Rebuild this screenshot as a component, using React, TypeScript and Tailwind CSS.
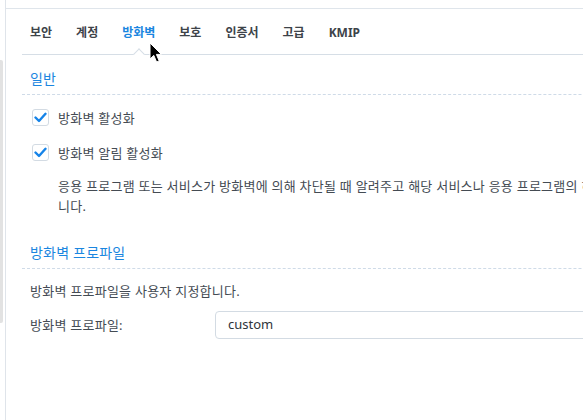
import React from 'react';

const tabs = ['보안', '계정', '방화벽', '보호', '인증서', '고급', 'KMIP'];
const activeTab = '방화벽';

const CheckBox: React.FC<{ label: string }> = ({ label }) => (
  <label className="flex items-center gap-[9px]">
    <span className="flex size-[17px] items-center justify-center rounded-[3px] border border-[#d3dbe3] bg-white">
      <svg width="13" height="11" viewBox="0 0 13 11" fill="none">
        <path d="M1.5 5.5 L5 9 L11.5 1.8" stroke="#1583e8" strokeWidth="2.4" strokeLinecap="round" strokeLinejoin="round" />
      </svg>
    </span>
    <span className="text-[13px] leading-[20px] tracking-[0.25px] text-[#444b53]">{label}</span>
  </label>
);

const SectionTitle: React.FC<{ title: string }> = ({ title }) => (
  <div className="border-b border-dashed border-[#cfdbe8] pl-[8px] pb-[5px]">
    <h3 className="text-[14px] leading-[20px] tracking-[0.2px] text-[#1a86e0]">{title}</h3>
  </div>
);

const Pointer: React.FC = () => (
  <svg className="absolute left-[149px] top-[42px]" width="14" height="22" viewBox="0 0 14 22">
    <path d="M1 1 L1 17 L4.8 13.4 L7.6 20 L10.2 18.9 L7.4 12.4 L12.4 12.4 Z" fill="#000" stroke="#fff" strokeWidth="1" />
  </svg>
);

export default function App() {
  return (
    <div className="relative flex h-[420px] w-[583px] overflow-hidden bg-white font-['Noto_Sans','Noto_Sans_CJK_KR',sans-serif]">
      {/* side panel edge with its scroll thumb */}
      <div className="w-[6px] shrink-0 border-r border-[#dfe4ea] pt-[60px]">
        <div className="h-[263px] w-[3px] rounded-r-[2px] bg-[#e2e2e2]" />
      </div>

      <div className="flex min-w-0 flex-1 flex-col pt-[8px]">
        <div className="flex-1 border-t border-[#dfe5eb] pl-[16px]">
          {/* tab strip */}
          <div className="relative flex h-[46px] w-[700px] items-end gap-[24px] border-b border-[#d6dee6] pb-[11px] pl-[8px]">
            {tabs.map((tab) => (
              <div key={tab} className="relative">
                <span
                  className={`text-[12px] font-bold leading-[16px] ${
                    tab === activeTab ? 'text-[#1a86e0]' : 'text-[#3d4349]'
                  }`}
                >
                  {tab}
                </span>
                {tab === activeTab && (
                  <span className="absolute bottom-[-15px] left-[13px] size-[8px] rotate-45 border-l border-t border-[#d6dee6] bg-white" />
                )}
              </div>
            ))}
          </div>

          <div className="w-[760px] pt-[14px]">
            <SectionTitle title="일반" />
            <div className="mt-[14px] flex flex-col gap-[18px] pl-[10px]">
              <div className="h-[17px] flex items-center">
                <CheckBox label="방화벽 활성화" />
              </div>
              <div className="h-[17px] flex items-center">
                <CheckBox label="방화벽 알림 활성화" />
              </div>
            </div>
            <p className="mt-[15px] pl-[36px] text-[13px] leading-[20px] tracking-[0.25px] text-[#444b53]">
              <span className="whitespace-nowrap">
                응용 프로그램 또는 서비스가 방화벽에 의해 차단될 때 알려주고 해당 서비스나 응용 프로그램의 허용 규칙을 만들 수 있도록 합
              </span>
              <br />
              니다.
            </p>

            <div className="mt-[27px]">
              <SectionTitle title="방화벽 프로파일" />
            </div>
            <p className="mt-[12px] pl-[8px] text-[13px] leading-[20px] tracking-[0.25px] text-[#444b53]">
              방화벽 프로파일을 사용자 지정합니다.
            </p>
            <div className="mt-[10px] flex items-center pl-[8px]">
              <span className="w-[185px] shrink-0 text-[13px] leading-[20px] tracking-[0.25px] text-[#444b53]">
                방화벽 프로파일:
              </span>
              <div className="flex h-[28px] w-[420px] items-center rounded-[4px] border border-[#d3dbe3] px-[12px] text-[13px] text-[#2f353b]">
                custom
              </div>
            </div>
          </div>
        </div>
      </div>

      <Pointer />
    </div>
  );
}
